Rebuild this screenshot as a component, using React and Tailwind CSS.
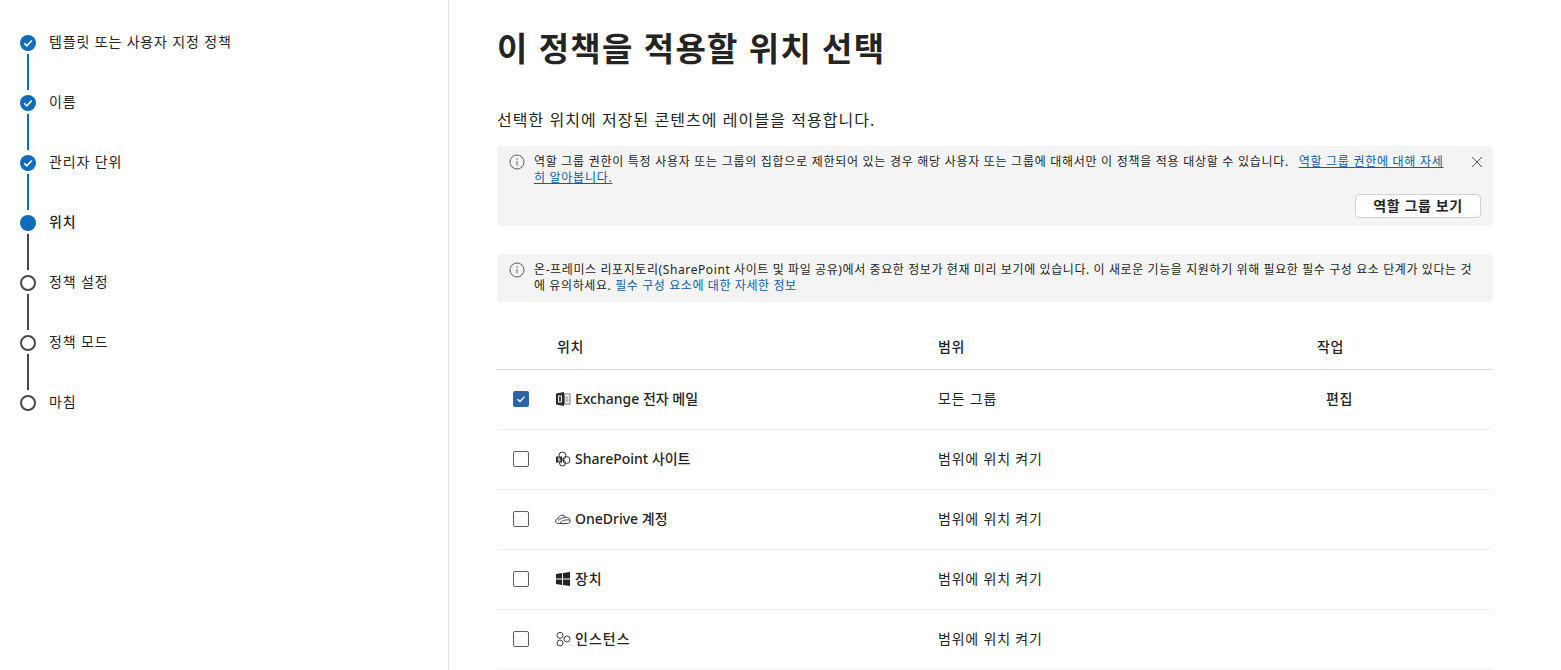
import React from 'react';

const KO = "font-['Noto_Sans','Noto_Sans_CJK_KR',sans-serif]";

const steps = [
  { label: '템플릿 또는 사용자 지정 정책', state: 'done' },
  { label: '이름', state: 'done' },
  { label: '관리자 단위', state: 'done' },
  { label: '위치', state: 'current' },
  { label: '정책 설정', state: 'todo' },
  { label: '정책 모드', state: 'todo' },
  { label: '마침', state: 'todo' },
];

const StepDot = ({ state }) => {
  if (state === 'todo') {
    return <div className="w-4 h-4 rounded-full border-2 border-[#4a4a4a] bg-white" />;
  }
  return (
    <div className="w-4 h-4 rounded-full bg-[#0f6cbd] flex items-center justify-center">
      {state === 'done' && (
        <svg width="12" height="12" viewBox="0 0 10 10" fill="none">
          <path d="M1.8 5.2 L4 7.3 L8.2 2.9" stroke="white" strokeWidth="1.4" />
        </svg>
      )}
    </div>
  );
};

const InfoIcon = () => (
  <svg width="16" height="16" viewBox="0 0 16 16" fill="none" className="shrink-0">
    <circle cx="8" cy="8" r="7" stroke="#605e5c" />
    <path d="M8 7v4.5" stroke="#605e5c" />
    <circle cx="8" cy="5" r="0.8" fill="#605e5c" />
  </svg>
);

const ExchangeIcon = () => (
  <svg width="16" height="16" viewBox="0 0 16 16" fill="none">
    <path d="M1 2.6 L9 1 V15 L1 13.4 Z" fill="#2b2b2b" />
    <rect x="3.6" y="5" width="2.8" height="6" stroke="white" fill="none" />
    <rect x="9.5" y="3" width="5.5" height="10" stroke="#77767a" fill="none" />
    <path d="M10.5 6h3M10.5 8h3M10.5 10h3" stroke="#77767a" />
  </svg>
);

const SharePointIcon = () => (
  <svg width="16" height="16" viewBox="0 0 16 16" fill="none">
    <circle cx="7.5" cy="4.5" r="3.5" stroke="#333" />
    <circle cx="11.5" cy="9" r="3.5" stroke="#333" />
    <circle cx="7.5" cy="12" r="3" stroke="#333" />
    <rect x="1" y="5.5" width="6" height="6" fill="#2b2b2b" />
    <path d="M5.2 7H3.2V8.4H5V10H3" stroke="white" strokeWidth="0.8" />
  </svg>
);

const OneDriveIcon = () => (
  <svg width="16" height="16" viewBox="0 0 16 16" fill="none">
    <path d="M3.2 12.5 C1.4 12.5 0.6 11.2 0.6 10 C0.6 8.7 1.6 7.7 3 7.6 C3.5 5.6 5 4.2 7 4.2 C8.6 4.2 9.8 5 10.5 6.2 C12.7 6 15.2 7.4 15.2 10 C15.2 11.6 14 12.5 12.7 12.5 Z" stroke="#444" />
    <path d="M3 9.4 C5 7.4 8 6.6 10.5 6.4 M5 12.4 C6.5 9.6 10 8.4 14.6 9" stroke="#444" />
  </svg>
);

const WindowsIcon = () => (
  <svg width="16" height="16" viewBox="0 0 16 16">
    <path d="M1 3 L7 2 V7.5 H1 Z M8 1.9 L15 1 V7.5 H8 Z M1 8.5 H7 V14 L1 13 Z M8 8.5 H15 V15 L8 14.1 Z" fill="#222" />
  </svg>
);

const InstanceIcon = () => (
  <svg width="16" height="16" viewBox="0 0 16 16" fill="none">
    <circle cx="5" cy="4.3" r="3" stroke="#444" />
    <circle cx="12" cy="8" r="3" stroke="#444" />
    <circle cx="5" cy="12" r="3" stroke="#444" />
  </svg>
);

const rows = [
  { name: 'Exchange 전자 메일', Icon: ExchangeIcon, scope: '모든 그룹', action: '편집', checked: true, track: 'tracking-normal' },
  { name: 'SharePoint 사이트', Icon: SharePointIcon, scope: '범위에 위치 켜기', track: 'tracking-normal' },
  { name: 'OneDrive 계정', Icon: OneDriveIcon, scope: '범위에 위치 켜기', track: 'tracking-normal' },
  { name: '장치', Icon: WindowsIcon, scope: '범위에 위치 켜기', track: 'tracking-[0.8px]' },
  { name: '인스턴스', Icon: InstanceIcon, scope: '범위에 위치 켜기', track: 'tracking-[1px]' },
];

const App = () => {
  return (
    <div className={`${KO} flex h-[670px] overflow-hidden bg-white text-[#242424]`}>
      {/* wizard steps */}
      <div className="w-[449px] shrink-0 border-r border-[#e1e1e1] pt-[31px] pl-5">
        {steps.map((step, i) => (
          <div key={step.label} className="flex gap-[13px]">
            <div className="flex flex-col items-center w-4">
              <div className="mt-[4px]"><StepDot state={step.state} /></div>
              {i < steps.length - 1 && (
                <div className={`w-0.5 h-9 mt-[3px] mb-[1px] ${i < 3 ? 'bg-[#0f6cbd]' : 'bg-[#4a4a4a]'}`} />
              )}
            </div>
            <div className={`text-[14px] tracking-[0.85px] leading-5 pt-px ${step.state === 'current' ? 'font-medium' : ''}`}>{step.label}</div>
          </div>
        ))}
      </div>

      {/* main */}
      <div className="w-[996px] ml-[48px] shrink-0">
        <h1 className="text-[33px] tracking-[1.35px] font-semibold leading-10 mt-[29px]">이 정책을 적용할 위치 선택</h1>
        <p className="text-[16px] tracking-[1.05px] leading-6 mt-[39px]">선택한 위치에 저장된 콘텐츠에 레이블을 적용합니다.</p>

        <div className="bg-[#f4f4f4] rounded h-[80px] mt-[14px] pl-3 pr-3 pt-2 relative">
          <div className="flex gap-[9px]">
            <InfoIcon />
            <div className="text-xs tracking-[0.72px] leading-4 w-[916px]">
              역할 그룹 권한이 특정 사용자 또는 그룹의 집합으로 제한되어 있는 경우 해당 사용자 또는 그룹에 대해서만 이 정책을 적용 대상할 수 있습니다.{' '}
              <a className="text-[#0f5ca8] underline ml-1.5">역할 그룹 권한에 대해 자세히 알아봅니다.</a>
            </div>
          </div>
          <svg width="12" height="12" viewBox="0 0 12 12" className="absolute right-[10px] top-[10px]" fill="none">
            <path d="M1 1l10 10M11 1L1 11" stroke="#555" />
          </svg>
          <div className="flex justify-end mt-2">
            <button className="w-[126px] h-6 bg-white border border-[#d1d1d1] rounded text-[14px] tracking-[0.6px] font-semibold leading-none">역할 그룹 보기</button>
          </div>
        </div>

        <div className="bg-[#f4f4f4] rounded h-12 mt-[28px] pl-3 pr-3 pt-2">
          <div className="flex gap-[9px]">
            <InfoIcon />
            <div className="text-xs tracking-[0.6px] leading-4 w-[945px]">
              온-프레미스 리포지토리(SharePoint 사이트 및 파일 공유)에서 중요한 정보가 현재 미리 보기에 있습니다. 이 새로운 기능을 지원하기 위해 필요한 필수 구성 요소 단계가 있다는 것에 유의하세요.{' '}
              <a className="text-[#0f5ca8]">필수 구성 요소에 대한 자세한 정보</a>
            </div>
          </div>
        </div>

        <div className="mt-[14px]">
          <div className="flex h-[54px] items-center pt-2 border-b border-[#d9d9d9] text-[14px] tracking-[0.5px] font-medium">
            <div className="w-[60px]" />
            <div className="w-[381px]">위치</div>
            <div className="w-[379px]">범위</div>
            <div>작업</div>
          </div>
          {rows.map((row) => (
            <div key={row.name} className="flex h-[60px] items-center pb-0.5 border-b border-[#f0f0f0] text-[14px]">
              <div className="w-[60px] pl-4">
                {row.checked ? (
                  <div className="w-4 h-4 rounded-[2px] bg-[#2b65a8] flex items-center justify-center">
                    <svg width="10" height="10" viewBox="0 0 10 10" fill="none">
                      <path d="M1.5 5.2 L4 7.5 L8.5 2.6" stroke="white" strokeWidth="1.4" />
                    </svg>
                  </div>
                ) : (
                  <div className="w-4 h-4 rounded-[2px] border border-[#605e5c]" />
                )}
              </div>
              <div className={`w-[381px] flex items-center gap-1 font-medium ${row.track}`}>
                <div className="-ml-[2px]"><row.Icon /></div>
                <span>{row.name}</span>
              </div>
              <div className="w-[388px] tracking-[0.8px]">{row.scope}</div>
              <div className="font-medium tracking-[0.5px]">{row.action}</div>
            </div>
          ))}
        </div>
      </div>
    </div>
  );
};

export default App;
